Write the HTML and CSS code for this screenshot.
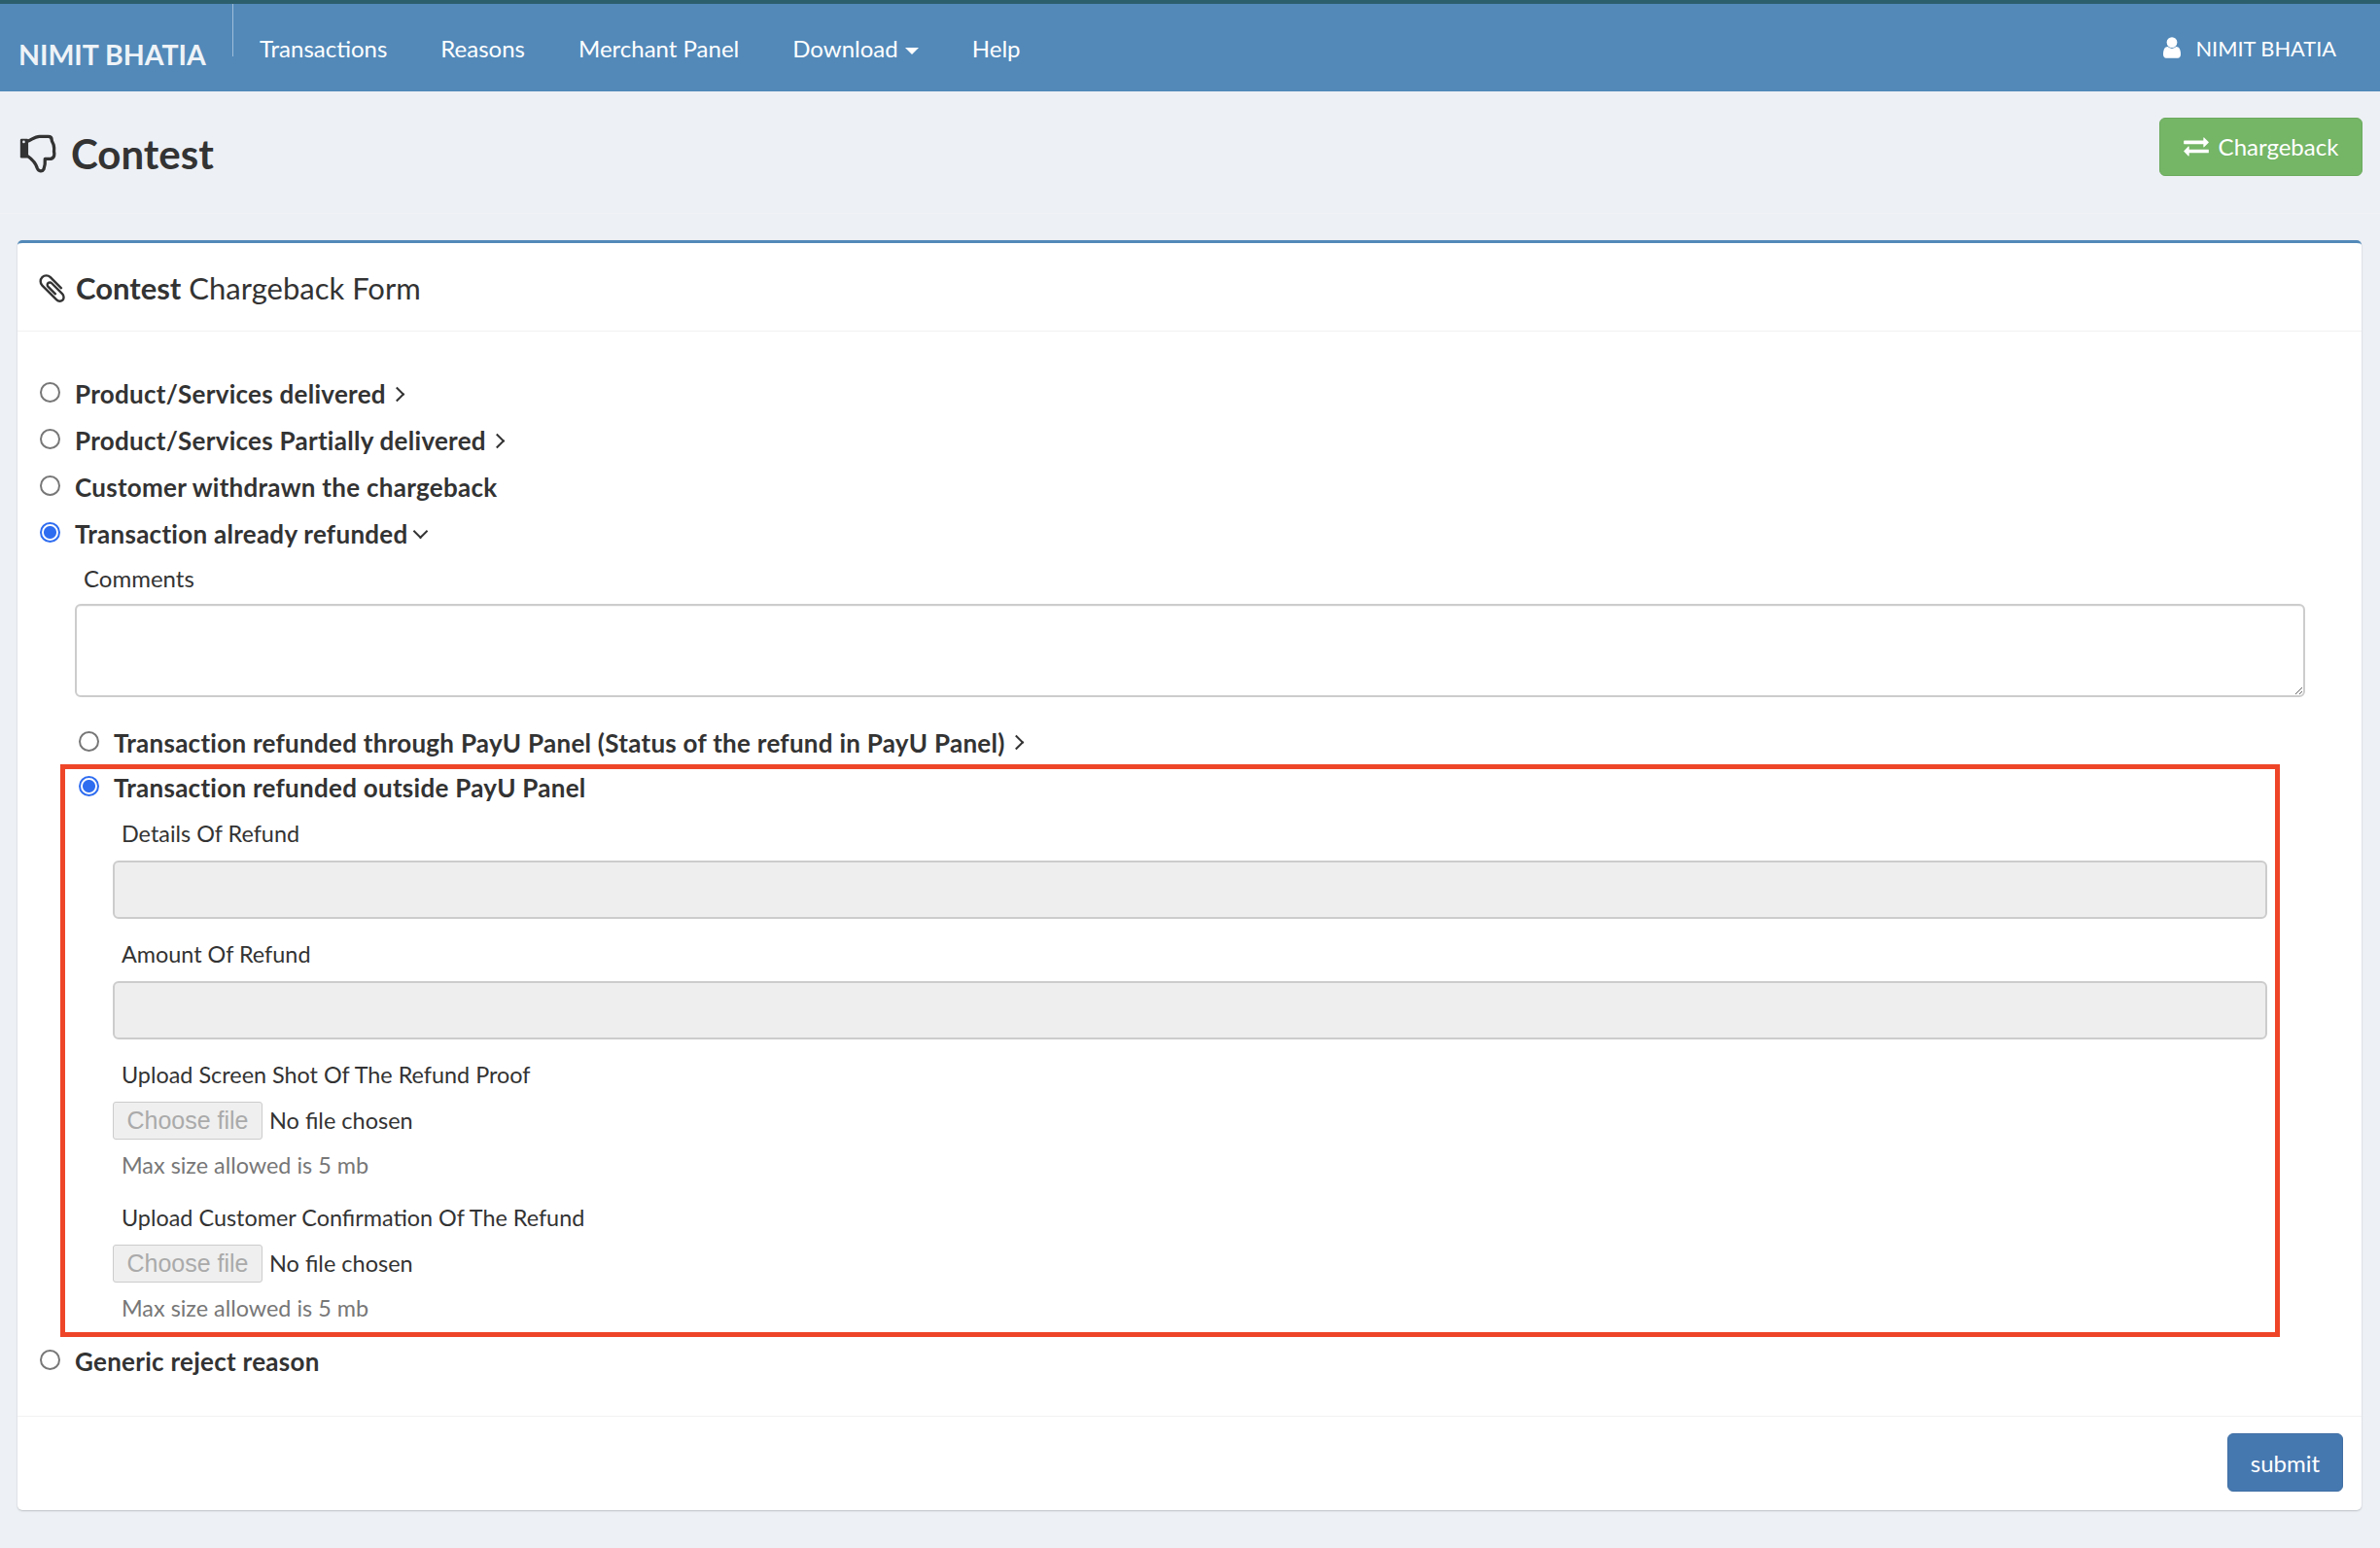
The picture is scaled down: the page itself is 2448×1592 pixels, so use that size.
FILE: index.html

```html
<!DOCTYPE html>
<html lang="en">
<head>
    <meta charset="UTF-8">
    <title>Contest</title>
    <link rel="stylesheet" href="styles.css">
</head>
<body>
    <nav class="navbar">
        <a class="brand">NIMIT BHATIA</a>
        <ul class="nav-links">
            <li>Transactions</li>
            <li>Reasons</li>
            <li>Merchant Panel</li>
            <li>Download <span class="caret"></span></li>
            <li>Help</li>
        </ul>
        <div class="nav-user">
            <svg class="icon-user" viewBox="256 128 1280 1536"><path d="M1536 1399q0 109-62.5 187t-150.5 78h-854q-88 0-150.5-78t-62.5-187q0-85 8.5-160.5t31.5-152 58.5-131 94-89 134.5-34.5q131 128 313 128t313-128q76 0 134.5 34.5t94 89 58.5 131 31.5 152 8.5 160.5zm-256-887q0 159-112.5 271.5t-271.5 112.5-271.5-112.5-112.5-271.5 112.5-271.5 271.5-112.5 271.5 112.5 112.5 271.5z"/></svg>
            NIMIT BHATIA
        </div>
    </nav>

    <header class="page-head">
        <h1>
            <svg class="icon-thumb" viewBox="33 26 114 124">
                <path d="M58 48C70 44 80 33 95 33H122C130 33 133 38 133 44C133 50 137 52 139 60C141 68 141 72 140 80C142 88 142 100 130 103H112C113 115 112 125 108 135C104 143 92 143 88 132C84 118 78 108 58 94" fill="none" stroke="#333" stroke-width="10" stroke-linejoin="round"/>
                <rect x="35" y="40" width="25" height="60" rx="4" fill="#333"/>
                <circle cx="46" cy="50" r="4" fill="#edf0f5"/>
            </svg>
            Contest
        </h1>
        <button class="btn-chargeback">
            <svg class="icon-exchange" viewBox="0 128 1792 1536"><path d="M1792 1184v192q0 13-9.5 22.5t-22.5 9.5h-1376v192q0 13-9.5 22.5t-22.5 9.5q-12 0-24-10l-319-320q-9-9-9-22 0-14 9-23l320-320q9-9 23-9 13 0 22.5 9.5t9.5 22.5v192h1376q13 0 22.5 9.5t9.5 22.5zm0-544q0 14-9 23l-320 320q-9 9-23 9-13 0-22.5-9.5t-9.5-22.5v-192h-1376q-13 0-22.5-9.5t-9.5-22.5v-192q0-13 9.5-22.5t22.5-9.5h1376v-192q0-14 9-23t23-9q12 0 24 10l319 319q9 9 9 23z"/></svg>
            Chargeback
        </button>
    </header>
    <div class="page-rule"></div>

    <section class="panel">
        <div class="panel-head">
            <svg class="icon-clip" viewBox="180 120 1420 1545"><path d="M1596 1385q0 117-79 196t-196 79q-135 0-235-100l-777-776q-113-115-113-271 0-159 110-270t269-111q158 0 273 113l605 606q10 10 10 22 0 16-30.5 46.5t-46.5 30.5q-13 0-23-10l-606-607q-79-77-181-77-106 0-179 75t-73 181q0 105 76 181l776 777q63 63 145 63 64 0 106-42t42-106q0-82-63-145l-581-581q-26-24-60-24-29 0-48 19t-19 48q0 32 25 59l410 410q10 10 10 22 0 16-31 47t-47 31q-12 0-22-10l-410-410q-63-61-63-149 0-82 57-139t139-57q88 0 149 63l581 581q100 98 100 235z"/></svg>
            <span><b>Contest</b> Chargeback Form</span>
        </div>

        <form class="panel-body">
            <label class="radio-row"><input type="radio" name="reason"><b>Product/Services delivered</b><span class="chev-right"></span></label>
            <label class="radio-row"><input type="radio" name="reason"><b>Product/Services Partially delivered</b><span class="chev-right"></span></label>
            <label class="radio-row"><input type="radio" name="reason"><b>Customer withdrawn the chargeback</b></label>
            <label class="radio-row"><input type="radio" name="reason" checked><b>Transaction already refunded</b><span class="chev-down"></span></label>

            <div class="refund-block">
                <label class="comments-label">Comments</label>
                <textarea class="comments"></textarea>

                <label class="radio-row sub-first"><input type="radio" name="refund"><b>Transaction refunded through PayU Panel (Status of the refund in PayU Panel)</b><span class="chev-right"></span></label>

                <div class="highlight">
                    <label class="radio-row"><input type="radio" name="refund" checked><b>Transaction refunded outside PayU Panel</b></label>
                    <div class="highlight-fields">
                        <label class="field-label">Details Of Refund</label>
                        <input class="text-input" type="text" disabled>
                        <label class="field-label">Amount Of Refund</label>
                        <input class="text-input" type="text" disabled>
                        <label class="field-label">Upload Screen Shot Of The Refund Proof</label>
                        <div class="file-row"><button class="file-btn" type="button" disabled>Choose file</button><span>No file chosen</span></div>
                        <p class="hint">Max size allowed is 5 mb</p>
                        <label class="field-label">Upload Customer Confirmation Of The Refund</label>
                        <div class="file-row"><button class="file-btn" type="button" disabled>Choose file</button><span>No file chosen</span></div>
                        <p class="hint">Max size allowed is 5 mb</p>
                    </div>
                </div>
            </div>

            <label class="radio-row generic"><input type="radio" name="reason"><b>Generic reject reason</b></label>
        </form>

        <div class="panel-foot">
            <button class="btn-submit">submit</button>
        </div>
    </section>
</body>
</html>
```

FILE: styles.css

```css
* {
    box-sizing: border-box;
}
body {
    margin: 0;
    min-height: 1592px;
    background-color: #edf0f5;
    color: #333;
    font-family: Lato, "Noto Sans", sans-serif;
    font-size: 23.4px;
}
.navbar {
    display: flex;
    height: 94px;
    background-color: #5289b9;
    border-top: 4px solid #2c5f6c;
    color: #fff;
}
.brand {
    width: 240px;
    height: 54px;
    padding: 34px 0 0 19px;
    border-right: 1px solid #9dbdd8;
    font-size: 28.5px;
    font-weight: 700;
    line-height: 36px;
    color: #eef3f7;
    white-space: nowrap;
}
.nav-links {
    display: flex;
    gap: 55px;
    margin: 0;
    padding: 32px 0 0 27px;
    list-style: none;
    line-height: 28px;
    font-size: 24px;
}
.caret {
    display: inline-block;
    margin-left: 1px;
    vertical-align: middle;
    border-top: 7px solid #fff;
    border-left: 7px solid transparent;
    border-right: 7px solid transparent;
}
.nav-user {
    display: flex;
    align-items: center;
    gap: 15px;
    height: 28px;
    margin: 31px 45px 0 auto;
    font-size: 21.8px;
}
.icon-user {
    width: 18px;
    height: 22px;
    fill: #fff;
}
.page-head {
    display: flex;
    justify-content: space-between;
    height: 125px;
    padding: 27px 18px 0 20px;
}
.page-head h1 {
    display: flex;
    align-items: center;
    gap: 15px;
    height: 74px;
    margin: 0;
    font-size: 42px;
    font-weight: 700;
}
.icon-thumb {
    width: 38px;
    height: 41px;
}
.btn-chargeback {
    display: flex;
    align-items: center;
    justify-content: center;
    gap: 10px;
    width: 209px;
    height: 60px;
    padding: 0 0 2px;
    background-color: #74b566;
    border: 1px solid #6cab5e;
    border-radius: 6px;
    color: #fff;
    font-family: inherit;
    font-size: 24px;
}
.icon-exchange {
    width: 26px;
    height: 22px;
    fill: #fff;
}
.page-rule {
    border-top: 1px solid #f0f2f6;
    margin-bottom: 27px;
}
.panel {
    height: 1306px;
    margin: 0 19px 0 18px;
    background-color: #fff;
    border-top: 3px solid #5289b9;
    border-radius: 5px;
    box-shadow: 0 1px 2px rgba(0, 0, 0, 0.2);
}
.panel-head {
    display: flex;
    align-items: center;
    gap: 11px;
    height: 91px;
    padding: 2px 0 0 22px;
    border-bottom: 1px solid #f2f2f2;
    font-size: 31px;
}
.icon-clip {
    width: 27px;
    height: 29px;
    fill: #333;
}
.panel-body {
    height: 1115px;
    padding: 40px 58px 0 23px;
}
.radio-row {
    display: flex;
    align-items: center;
    height: 48px;
}
.radio-row b {
    font-size: 26px;
    letter-spacing: 0.27px;
}
.radio-row input {
    flex: none;
    width: 21px;
    height: 21px;
    margin: -3px 15px 0 0;
    appearance: none;
    background-color: #fff;
    border: 2px solid #777;
    border-radius: 50%;
}
.radio-row input:checked {
    border-color: #2f6df0;
    background: radial-gradient(circle, #2f6df0 0 6px, #fff 7px);
}
.chev-right,
.chev-down {
    width: 11px;
    height: 11px;
    border-top: 2px solid #333;
    border-right: 2px solid #333;
}
.chev-right {
    margin-left: 6px;
    transform: rotate(45deg);
}
.chev-down {
    margin: -6px 0 0 7px;
    transform: rotate(135deg);
}
.refund-block {
    padding-left: 36px;
}
.comments-label {
    display: block;
    height: 43px;
    margin-top: 5px;
    padding-left: 9px;
    line-height: 34px;
    font-size: 24px;
}
.comments {
    display: block;
    width: 100%;
    height: 96px;
    border: 2px solid #ccc;
    border-radius: 6px;
    box-shadow: inset 0 1px 1px rgba(0, 0, 0, 0.05);
}
.sub-first {
    height: 45px;
    margin-top: 24px;
    padding-left: 4px;
}
.highlight {
    width: 2283px;
    height: 589px;
    margin-left: -15px;
    padding: 0 8px 0 14px;
    border: 5px solid #ee4528;
}
.highlight .radio-row {
    height: 38px;
    margin-bottom: 12px;
}
.highlight-fields {
    padding-left: 35px;
}
.field-label {
    display: block;
    height: 44px;
    padding-left: 9px;
    line-height: 32px;
}
.text-input {
    display: block;
    width: 100%;
    height: 60px;
    margin-bottom: 20px;
    background-color: #eee;
    border: 2px solid #ccc;
    border-radius: 6px;
}
.file-row {
    display: flex;
    align-items: center;
    gap: 7px;
    height: 39px;
    font-size: 23.5px;
}
.file-row span {
    margin-bottom: 2px;
}
.file-btn {
    width: 154px;
    height: 39px;
    padding: 0;
    background-color: #efefef;
    border: 1px solid #ccc;
    border-radius: 3px;
    color: #aaa;
    font-family: "Liberation Sans", Arial, sans-serif;
    font-size: 25px;
}
.hint {
    height: 64px;
    margin: 0;
    padding: 10px 0 0 9px;
    color: #777;
    line-height: 32px;
}
.generic {
    margin-top: 1px;
}
.panel-foot {
    display: flex;
    justify-content: flex-end;
    padding: 17px 19px 0 0;
    border-top: 1px solid #f2f2f2;
}
.btn-submit {
    width: 119px;
    height: 60px;
    background-color: #4678b0;
    border: 1px solid #3f6ea3;
    border-radius: 6px;
    color: #fff;
    font-family: inherit;
    font-size: 24px;
}
```
